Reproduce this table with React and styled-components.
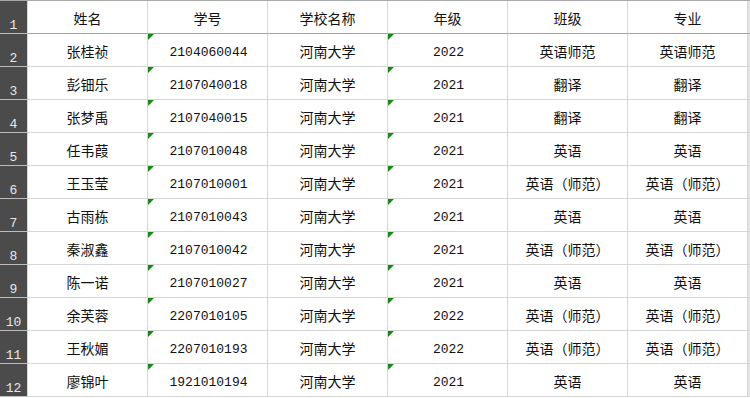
import React from "react";
import styled, { createGlobalStyle, css } from "styled-components";

const Global = createGlobalStyle`
  html, body { margin: 0; padding: 0; background: #fff; }
  body { font-family: "Noto Sans CJK SC", "Noto Sans", sans-serif; }
`;

const Sheet = styled.div`
  display: grid;
  grid-template-columns: 28px repeat(6, 120px) 2px;
  grid-auto-rows: 33px;
  width: 750px;
  border-top: 1px solid #a8a8a8;
  box-sizing: border-box;
`;

const RowHead = styled.div`
  background: #4b4b4b;
  color: #e8e8e8;
  font-family: "Liberation Mono", "DejaVu Sans Mono", monospace;
  font-size: 13px;
  display: flex;
  align-items: flex-end;
  justify-content: center;
  padding-bottom: 1px;
  box-sizing: border-box;
  border-bottom: 1px solid #bdbdbd;
  border-right: 1px solid #d8d8d8;
  line-height: 1;
`;

const Cell = styled.div`
  position: relative;
  display: flex;
  align-items: center;
  justify-content: center;
  box-sizing: border-box;
  border-right: 1px solid #d6d6d6;
  border-bottom: 1px solid ${(p) => (p.$header ? "#a3a3a3" : "#d6d6d6")};
  font-size: 14px;
  color: #111;
  padding-top: 2px;
  font-family: ${(p) =>
    p.$mono
      ? `"Liberation Mono", "DejaVu Sans Mono", monospace`
      : `"Noto Sans CJK SC", "Noto Sans", sans-serif`};
  ${(p) =>
    p.$mono &&
    css`
      font-size: 13px;
      padding-top: 5px;
      padding-left: 2px;
    `}
  ${(p) =>
    p.$flag &&
    css`
      &::before {
        content: "";
        position: absolute;
        top: 0;
        left: 0;
        width: 0;
        height: 0;
        border-top: 6px solid #138a13;
        border-right: 6px solid transparent;
      }
    `}
`;

const Edge = styled.div`
  background: #e4e4e4;
  border-bottom: 1px solid ${(p) => (p.$header ? "#a3a3a3" : "#d6d6d6")};
  box-sizing: border-box;
`;

const headers = ["姓名", "学号", "学校名称", "年级", "班级", "专业"];

const rows = [
  ["张桂祯", "2104060044", "河南大学", "2022", "英语师范", "英语师范"],
  ["彭钿乐", "2107040018", "河南大学", "2021", "翻译", "翻译"],
  ["张梦禹", "2107040015", "河南大学", "2021", "翻译", "翻译"],
  ["任韦葭", "2107010048", "河南大学", "2021", "英语", "英语"],
  ["王玉莹", "2107010001", "河南大学", "2021", "英语（师范）", "英语（师范）"],
  ["古雨栋", "2107010043", "河南大学", "2021", "英语", "英语"],
  ["秦淑鑫", "2107010042", "河南大学", "2021", "英语（师范）", "英语（师范）"],
  ["陈一诺", "2107010027", "河南大学", "2021", "英语", "英语"],
  ["余芙蓉", "2207010105", "河南大学", "2022", "英语（师范）", "英语（师范）"],
  ["王秋媚", "2207010193", "河南大学", "2022", "英语（师范）", "英语（师范）"],
  ["廖锦叶", "1921010194", "河南大学", "2021", "英语", "英语"],
];

export default function App() {
  return (
    <>
      <Global />
      <Sheet>
        <RowHead>1</RowHead>
        {headers.map((h) => (
          <Cell key={h} $header>
            {h}
          </Cell>
        ))}
        <Edge $header />
        {rows.map((r, i) => (
          <React.Fragment key={i}>
            <RowHead>{i + 2}</RowHead>
            {r.map((v, j) => (
              <Cell
                key={j}
                $mono={j === 1 || j === 3}
                $flag={j === 1 || j === 3}
              >
                {v}
              </Cell>
            ))}
            <Edge />
          </React.Fragment>
        ))}
      </Sheet>
    </>
  );
}
